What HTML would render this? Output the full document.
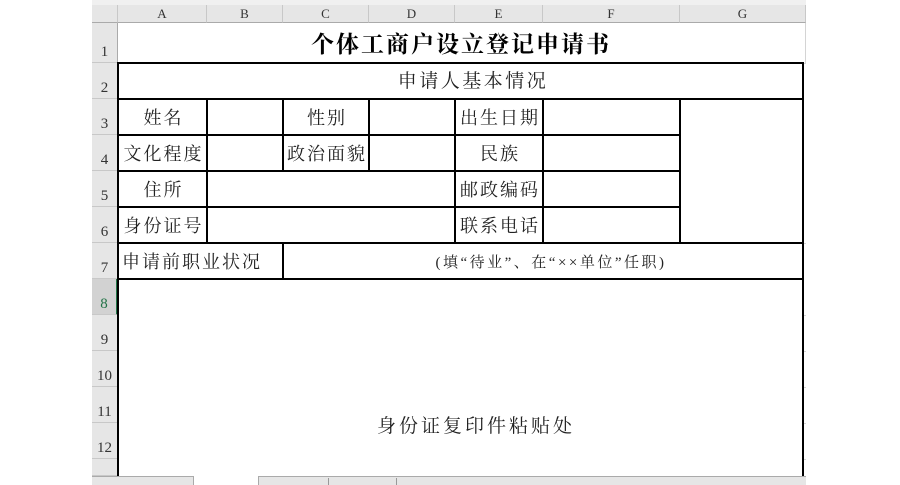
<!DOCTYPE html>
<html><head><meta charset="utf-8"><style>
body{margin:0;width:900px;height:485px;background:#fff;position:relative;overflow:hidden;font-family:"Liberation Serif","Noto Serif CJK SC",serif}
div{position:absolute;box-sizing:border-box}
.ch{top:5px;height:18px;background:#e6e6e6;border-right:1px solid #c8c8c8;border-bottom:1px solid #aaa;font-size:13px;text-align:center;line-height:18px;color:#333}
.rh{left:92px;width:26px;background:#e6e6e6;border-bottom:1px solid #c8c8c8;border-right:1px solid #aaa;font-size:15px;text-align:center;color:#333;display:flex;align-items:flex-end;justify-content:center;padding-bottom:1px}
.h{height:2px;background:#000}
.v{width:2px;background:#000}
.t{font-size:18px;color:#222;white-space:nowrap;line-height:20px;letter-spacing:2px;text-indent:2px}
.gl{position:absolute;height:1px;background:#d4d4d4}
</style></head><body>
<div style="left:92px;top:0;width:714px;height:5px;background:#f0f0f0"></div>
<div class="ch" style="left:92px;width:26px"></div>
<div class="ch" style="left:118px;width:89px">A</div>
<div class="ch" style="left:207px;width:76px">B</div>
<div class="ch" style="left:283px;width:86px">C</div>
<div class="ch" style="left:369px;width:86px">D</div>
<div class="ch" style="left:455px;width:88px">E</div>
<div class="ch" style="left:543px;width:137px">F</div>
<div class="ch" style="left:680px;width:126px">G</div>

<div class="rh" style="top:23px;height:40px">1</div>
<div class="rh" style="top:63px;height:36px">2</div>
<div class="rh" style="top:99px;height:36px">3</div>
<div class="rh" style="top:135px;height:36px">4</div>
<div class="rh" style="top:171px;height:36px">5</div>
<div class="rh" style="top:207px;height:36px">6</div>
<div class="rh" style="top:243px;height:36px">7</div>
<div class="rh" style="top:279px;height:36px;background:#d2d2d2;color:#217346;border-right:2px solid #217346">8</div>
<div class="rh" style="top:315px;height:36px">9</div>
<div class="rh" style="top:351px;height:36px">10</div>
<div class="rh" style="top:387px;height:36px">11</div>
<div class="rh" style="top:423px;height:36px">12</div>
<div class="rh" style="top:459px;height:17px"></div>

<div class="gl" style="left:802px;top:63px;width:4px"></div>
<div class="gl" style="left:802px;top:243px;width:4px"></div>
<div class="gl" style="left:802px;top:315px;width:4px"></div>
<div class="gl" style="left:802px;top:351px;width:4px"></div>
<div class="gl" style="left:802px;top:387px;width:4px"></div>
<div class="gl" style="left:802px;top:423px;width:4px"></div>
<div class="gl" style="left:802px;top:459px;width:4px"></div>
<div style="left:805px;top:23px;width:1px;height:40px;background:#d4d4d4"></div>

<div class="h" style="left:118px;top:62px;width:686px"></div>
<div class="h" style="left:118px;top:98px;width:686px"></div>
<div class="h" style="left:118px;top:134px;width:562px"></div>
<div class="h" style="left:118px;top:170px;width:562px"></div>
<div class="h" style="left:118px;top:206px;width:562px"></div>
<div class="h" style="left:118px;top:242px;width:686px"></div>
<div class="h" style="left:118px;top:278px;width:686px"></div>
<div class="v" style="left:117px;top:62px;height:414px"></div>
<div class="v" style="left:802px;top:62px;height:414px"></div>
<div class="v" style="left:206px;top:98px;height:146px"></div>
<div class="v" style="left:282px;top:98px;height:72px"></div>
<div class="v" style="left:282px;top:242px;height:38px"></div>
<div class="v" style="left:368px;top:98px;height:72px"></div>
<div class="v" style="left:454px;top:98px;height:146px"></div>
<div class="v" style="left:542px;top:98px;height:146px"></div>
<div class="v" style="left:679px;top:98px;height:146px"></div>

<div class="t" style="left:118px;width:684px;top:32px;text-align:center;font-size:23px;font-weight:bold;line-height:26px;color:#000;letter-spacing:2px">个体工商户设立登记申请书</div>
<div class="t" style="left:130px;width:684px;top:72px;text-align:center;font-size:19px;letter-spacing:2.5px">申请人基本情况</div>
<div class="t" style="left:118px;width:89px;top:108px;text-align:center">姓名</div>
<div class="t" style="left:283px;width:86px;top:108px;text-align:center">性别</div>
<div class="t" style="left:455px;width:88px;top:108px;text-align:center">出生日期</div>
<div class="t" style="left:118px;width:89px;top:144px;text-align:center">文化程度</div>
<div class="t" style="left:283px;width:86px;top:144px;text-align:center">政治面貌</div>
<div class="t" style="left:455px;width:88px;top:144px;text-align:center">民族</div>
<div class="t" style="left:118px;width:89px;top:180px;text-align:center">住所</div>
<div class="t" style="left:455px;width:88px;top:180px;text-align:center">邮政编码</div>
<div class="t" style="left:118px;width:89px;top:216px;text-align:center">身份证号</div>
<div class="t" style="left:455px;width:88px;top:216px;text-align:center">联系电话</div>
<div class="t" style="left:122px;top:252px;text-indent:0">申请前职业状况</div>
<div class="t" style="left:290px;width:520px;top:253px;text-align:center;font-size:15px;letter-spacing:2.5px">(填“待业”、在“××单位”任职)</div>
<div class="t" style="left:133px;width:684px;top:417px;text-align:center;font-size:19px;letter-spacing:3px">身份证复印件粘贴处</div>

<div style="left:92px;top:476px;width:714px;height:9px;background:#e6e6e6;border-top:1px solid #aaa"></div>
<div style="left:193px;top:476px;width:66px;height:9px;background:#fff;border-left:1px solid #aaa;border-right:1px solid #aaa"></div>
<div style="left:328px;top:478px;width:1px;height:7px;background:#999"></div>
<div style="left:396px;top:478px;width:1px;height:7px;background:#999"></div>
</body></html>
